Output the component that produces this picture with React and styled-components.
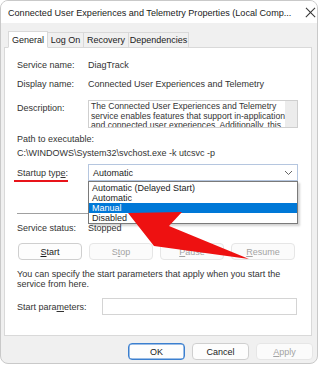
import React from 'react';
import styled, { createGlobalStyle } from 'styled-components';

const GlobalStyle = createGlobalStyle`
  body {
    margin: 0;
    background: #ffffff;
    font-family: "Liberation Sans", Arial, sans-serif;
  }
  * { box-sizing: border-box; }
`;

const Window = styled.div`
  position: relative;
  width: 318px;
  height: 364px;
  background: #f0f0f0;
  border: 1px solid #c9c9c9;
  border-radius: 8px;
  overflow: hidden;
  color: #1b1b1b;
  font-size: 9px;
`;

const TitleBar = styled.div`
  height: 22px;
  background: #ffffff;
  display: flex;
  align-items: center;
  padding: 1px 0 0 7px;
`;

const TitleText = styled.div`
  width: 288px;
  flex: none;
  font-size: 9.1px;
  color: #1a1a1a;
  white-space: nowrap;
  overflow: hidden;
`;

const CloseButton = styled.div`
  position: relative;
  flex: none;
  width: 11px;
  height: 11px;
  margin-left: 9px;

  &::before,
  &::after {
    content: '';
    position: absolute;
    left: -1px;
    top: 5px;
    width: 13px;
    height: 1.2px;
    background: #333333;
  }
  &::before { transform: rotate(45deg); }
  &::after { transform: rotate(-45deg); }
`;

const TabStrip = styled.div`
  display: flex;
  align-items: flex-end;
  height: 17px;
  margin-top: 7px;
  padding-left: 9px;
  position: relative;
  z-index: 2;
`;

const Tab = styled.div`
  width: ${(p) => p.w}px;
  height: ${(p) => (p.active ? 17 : 15)}px;
  margin: ${(p) => (p.active ? '0 0 -1px -2px' : '0')};
  display: flex;
  align-items: center;
  justify-content: center;
  background: ${(p) => (p.active ? '#ffffff' : '#f0f0f0')};
  border: 1px solid #d9d9d9;
  border-bottom: ${(p) => (p.active ? '1px solid #ffffff' : 'none')};
  border-left: ${(p) => (p.active ? '1px solid #d9d9d9' : 'none')};
  font-size: 9px;
  color: #1b1b1b;
`;

const Panel = styled.div`
  margin: 0 5px 0 3px;
  height: 289px;
  background: #ffffff;
  border: 1px solid #d9d9d9;
  padding: 0 13px 0 12px;
  position: relative;
  z-index: 1;
`;

const Row = styled.div`
  display: flex;
  align-items: ${(p) => (p.top ? 'flex-start' : 'center')};
  min-height: ${(p) => p.h || 14}px;
  margin-top: ${(p) => p.mt || 0}px;
  position: relative;
`;

const Label = styled.div`
  width: 71px;
  flex: none;
  line-height: 14px;
  color: #333333;
  position: relative;
  margin-top: ${(p) => p.mt || 0}px;
`;

const Value = styled.div`
  color: #333333;
  line-height: 14px;
  white-space: nowrap;
`;

const Plain = styled.div`
  color: #333333;
  line-height: 14px;
  white-space: nowrap;
`;

const DescBox = styled.div`
  width: 210px;
  height: 28px;
  border: 1px solid #cfcfcf;
  display: flex;
  overflow: hidden;
`;

const DescText = styled.div`
  flex: 1;
  padding: 1px 2px 0 2px;
  font-size: 8.6px;
  line-height: 9.5px;
  color: #333333;
  overflow: hidden;
  white-space: nowrap;
`;

const ScrollTrack = styled.div`
  width: 12px;
  flex: none;
  background: #ececec;
`;

const RedUnderline = styled.div`
  position: absolute;
  left: -3px;
  bottom: -2px;
  width: 54px;
  height: 2px;
  background: #e8141a;
`;

const ComboWrap = styled.div`
  position: relative;
  width: 210px;
`;

const Combo = styled.div`
  height: 17px;
  border: 1px solid #b5c6df;
  background: #ffffff;
  display: flex;
  align-items: center;
  justify-content: space-between;
  padding: 0 4px 0 4px;
  color: #1b1b1b;
`;

const DropList = styled.div`
  position: absolute;
  top: 17px;
  left: 0;
  width: 210px;
  padding-top: 1px;
  background: #ffffff;
  border: 1px solid #7a7a7a;
  box-shadow: 2px 2px 2px rgba(0, 0, 0, 0.18);
  z-index: 5;
`;

const DropItem = styled.div`
  height: 10px;
  line-height: 10px;
  padding-left: 3px;
  background: ${(p) => (p.selected ? '#0078d7' : 'transparent')};
  color: ${(p) => (p.selected ? '#ffffff' : '#1b1b1b')};
  white-space: nowrap;
`;

const Separator = styled.div`
  height: 1px;
  background: #a0a0a0;
  margin-top: 32px;
`;

const ButtonRow = styled.div`
  display: flex;
  gap: ${(p) => p.gap || 7}px;
  margin-top: ${(p) => p.mt || 0}px;
  padding-left: ${(p) => p.pl || 0}px;
  justify-content: ${(p) => p.justify || 'flex-start'};
  padding-right: ${(p) => p.pr || 0}px;
`;

const Button = styled.div`
  width: ${(p) => p.w || 64}px;
  height: 17px;
  border-radius: 4px;
  display: flex;
  align-items: center;
  justify-content: center;
  font-size: 9px;
  background: ${(p) => (p.disabled ? '#fbfbfb' : '#fdfdfd')};
  color: ${(p) => (p.disabled ? '#a3a3a3' : '#1b1b1b')};
  border: 1px solid ${(p) => (p.primary ? '#3b7fcf' : p.disabled ? '#e6e6e6' : '#cfcfcf')};
  box-shadow: ${(p) => (p.primary ? 'inset 0 0 0 0.5px #3b7fcf' : 'none')};
`;

const Para = styled.div`
  margin-top: 9px;
  width: 281px;
  line-height: 10px;
  color: #333333;
`;

const ParamInput = styled.div`
  width: 195px;
  height: 17px;
  border: 1px solid #d4d4d4;
  background: #ffffff;
  margin-left: 15px;
`;

const Footer = styled(ButtonRow)`
  margin-top: 7px;
`;

const ArrowLayer = styled.svg`
  position: absolute;
  left: 0;
  top: 0;
  pointer-events: none;
  z-index: 10;
`;

export default function App() {
  return (
    <>
      <GlobalStyle />
      <Window>
        <TitleBar>
          <TitleText>Connected User Experiences and Telemetry Properties (Local Comp...</TitleText>
          <CloseButton aria-label="Close" />
        </TitleBar>

        <TabStrip>
          <Tab w={40} active>General</Tab>
          <Tab w={36}>Log On</Tab>
          <Tab w={45}>Recovery</Tab>
          <Tab w={60}>Dependencies</Tab>
        </TabStrip>

        <Panel>
          <Row mt={10}>
            <Label>Service name:</Label>
            <Value>DiagTrack</Value>
          </Row>
          <Row mt={5}>
            <Label>Display name:</Label>
            <Value>Connected User Experiences and Telemetry</Value>
          </Row>
          <Row mt={9} top h={28}>
            <Label mt={1}>Description:</Label>
            <DescBox>
              <DescText>
                The Connected User Experiences and Telemetry<br />
                service enables features that support in-application<br />
                and connected user experiences. Additionally, this
              </DescText>
              <ScrollTrack />
            </DescBox>
          </Row>
          <Row mt={4}>
            <Plain>Path to executable:</Plain>
          </Row>
          <Row mt={0}>
            <Plain>C:\WINDOWS\System32\svchost.exe -k utcsvc -p</Plain>
          </Row>
          <Row mt={4} h={17}>
            <Label>
              Startup typ<u>e</u>:
              <RedUnderline />
            </Label>
            <ComboWrap>
              <Combo>
                <span>Automatic</span>
                <svg width="9" height="6" viewBox="0 0 9 6">
                  <path d="M1 1 L4.5 4.5 L8 1" stroke="#555" strokeWidth="0.9" fill="none" />
                </svg>
              </Combo>
              <DropList>
                <DropItem>Automatic (Delayed Start)</DropItem>
                <DropItem>Automatic</DropItem>
                <DropItem selected>Manual</DropItem>
                <DropItem>Disabled</DropItem>
              </DropList>
            </ComboWrap>
          </Row>
          <Separator />
          <Row mt={7}>
            <Label>Service status:</Label>
            <Value>Stopped</Value>
          </Row>
          <ButtonRow mt={8} pl={1}>
            <Button><span><u>S</u>tart</span></Button>
            <Button disabled><span>S<u>t</u>op</span></Button>
            <Button disabled><span><u>P</u>ause</span></Button>
            <Button disabled><span><u>R</u>esume</span></Button>
          </ButtonRow>
          <Para>
            You can specify the start parameters that apply when you start the service from here.
          </Para>
          <Row mt={9} h={17}>
            <Plain>Start para<u>m</u>eters:</Plain>
            <ParamInput />
          </Row>
        </Panel>

        <Footer justify="flex-end" pr={4}>
          <Button w={57} primary>OK</Button>
          <Button w={57}>Cancel</Button>
          <Button w={57} disabled><span><u>A</u>pply</span></Button>
        </Footer>

        <ArrowLayer width="318" height="364" viewBox="0 0 318 364">
          <polygon points="127,212 181,211 168,225 248,258 153,245" fill="#ee1111" />
        </ArrowLayer>
      </Window>
    </>
  );
}
